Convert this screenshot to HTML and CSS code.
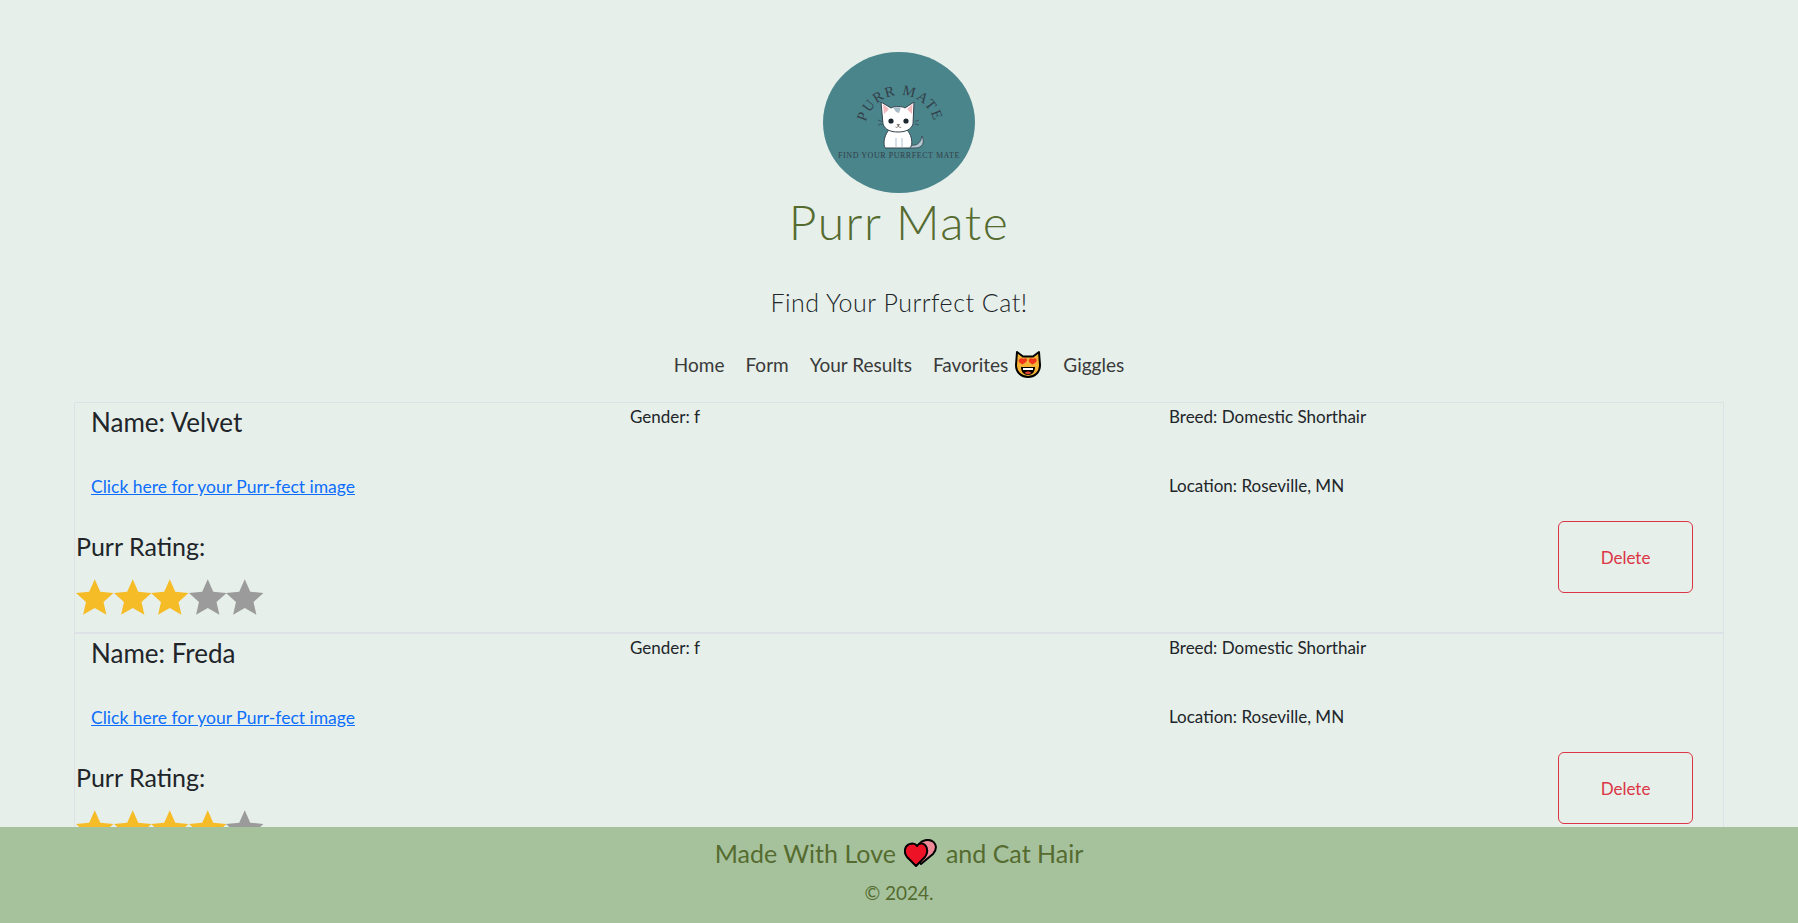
FILE: index.html
```html
<!DOCTYPE html>
<html lang="en">
<head>
<meta charset="utf-8">
<title>Purr Mate</title>
<link rel="stylesheet" href="styles.css">
</head>
<body>
<svg class="defs" width="0" height="0" aria-hidden="true">
  <symbol id="star" viewBox="0 0 38 36"><polygon points="19,0 24.6,12.6 38,13.9 27.9,23 30.8,36 19,29.2 7.2,36 10.1,23 0,13.9 13.4,12.6"/></symbol>
</svg>
<header class="site-header">
  <svg class="logo" viewBox="0 0 152 141" role="img" aria-label="Purr Mate logo">
    <defs><path id="arc" d="M42 78 A35 35 0 0 1 112 78"/></defs>
    <ellipse cx="76" cy="70.5" rx="76" ry="70.5" fill="#4a858c"/>
    <text class="logo-arc"><textPath href="#arc" startOffset="50%" text-anchor="middle">PURR MATE</textPath></text>
    <path d="M84 92 C94 96 98 90 99 84 C102 90 100 96 92 96 L84 96Z" fill="#b4c6cf" stroke="#33424e" stroke-width=".8"/>
    <path d="M66 78 C60 84 60 96 63 96 L86 96 C90 96 90 84 84 78Z" fill="#fff" stroke="#33424e" stroke-width="1"/>
    <path d="M73 86V96M79 86V96" stroke="#9fb0bc" stroke-width=".8"/>
    <path d="M60 72 L58 50 L68 56 C72 54 79 54 82 56 L91 50 L90 72 C88 78 82 80 75 80 C68 80 62 78 60 72Z" fill="#fff" stroke="#33424e" stroke-width="1"/>
    <path d="M60 52 L66 57 L61 62Z M89.500 52 L84 57 L89 62Z" fill="#f2b8bd"/>
    <path d="M70 55.500 C73 55 76 55 78 55.500 L76 61 L73 60Z" fill="#a9bdc9"/>
    <circle cx="68" cy="69" r="2.600" fill="#1d2730"/><circle cx="83" cy="69" r="2.600" fill="#1d2730"/>
    <path d="M74 72.500h2.500l-1.200 1.500zM72.500 75c1.500 1 2 0 2.800-1c.8 1 1.500 2 3 1" fill="#a68d6a" stroke="#3a3a3a" stroke-width=".5"/>
    <path d="M55 68l4 1.500M55 73l4-1M96 68l-4 1.500M96 73l-4-1" stroke="#33424e" stroke-width=".7"/>
    <text class="logo-tag" x="76" y="105.500" text-anchor="middle">FIND YOUR PURRFECT MATE</text>
  </svg>
  <h1 class="title">Purr Mate</h1>
  <p class="tagline">Find Your Purrfect Cat!</p>
  <nav class="nav">
    <a href="#">Home</a>
    <a href="#">Form</a>
    <a href="#">Your Results</a>
    <a href="#" class="fav">Favorites
      <svg class="emoji" viewBox="0 0 28 28" aria-hidden="true">
        <path d="M3 2 L9 6.500 H19 L25 2 L26 15 C26 23 20 27 14 27 C8 27 2 23 2 15Z" fill="#f5b335" stroke="#000" stroke-width="2" stroke-linejoin="round"/>
        <path d="M5 9.500c2-2 4-1.500 4.500-.5c1-1 3-1 3.500.5c.5 2-3 4-4.500 5c-2-1-5-3-3.500-5zM15 9.500c1-1.500 3-1.500 4-.5c1-1 3-1 3.500.5c1 2-2 4-4 5c-2-1-4.500-3-3.500-5z" fill="#f0371c"/>
        <path d="M7 17 H21 C21 22 18 25 14 25 C10 25 7 22 7 17Z" fill="#000"/>
        <path d="M9 18h10v2H9z" fill="#fff"/><path d="M10.500 23c2-2 5-2 7 0c-2 1.500-5 1.500-7 0z" fill="#e8443a"/>
      </svg>
    </a>
    <a href="#">Giggles</a>
  </nav>
</header>
<main class="list">
  <article class="card">
    <div class="row-top">
      <h2 class="name">Name: Velvet</h2>
      <p class="meta">Gender: f</p>
      <p class="meta">Breed: Domestic Shorthair</p>
    </div>
    <div class="row-mid">
      <a class="image-link" href="#">Click here for your Purr-fect image</a>
      <span></span>
      <p class="meta">Location: Roseville, MN</p>
    </div>
    <div class="row-bottom">
      <div class="rating">
        <h3 class="rating-label">Purr Rating:</h3>
        <div class="stars">
          <svg class="star on"><use href="#star"/></svg><svg class="star on"><use href="#star"/></svg><svg class="star on"><use href="#star"/></svg><svg class="star"><use href="#star"/></svg><svg class="star"><use href="#star"/></svg>
        </div>
      </div>
      <button class="delete" type="button">Delete</button>
    </div>
  </article>
  <article class="card">
    <div class="row-top">
      <h2 class="name">Name: Freda</h2>
      <p class="meta">Gender: f</p>
      <p class="meta">Breed: Domestic Shorthair</p>
    </div>
    <div class="row-mid">
      <a class="image-link" href="#">Click here for your Purr-fect image</a>
      <span></span>
      <p class="meta">Location: Roseville, MN</p>
    </div>
    <div class="row-bottom">
      <div class="rating">
        <h3 class="rating-label">Purr Rating:</h3>
        <div class="stars">
          <svg class="star on"><use href="#star"/></svg><svg class="star on"><use href="#star"/></svg><svg class="star on"><use href="#star"/></svg><svg class="star on"><use href="#star"/></svg><svg class="star"><use href="#star"/></svg>
        </div>
      </div>
      <button class="delete" type="button">Delete</button>
    </div>
  </article>
</main>
<footer class="footer">
  <p class="made">Made With Love
    <svg class="hearts" viewBox="0 0 34 28" aria-hidden="true">
      <path d="M15 5 C18 1 24 0 28 2 C33 5 33 11 29 15 L17 25 L10 16Z" fill="#ee8a98" stroke="#000" stroke-width="2" stroke-linejoin="round"/>
      <path d="M12 27 L3 18 C-1 13 1 6 6 5 C9 4 12 5 13 7 C15 4 19 4 21 6 C24 9 24 14 21 18Z" fill="#ee1226" stroke="#000" stroke-width="2" stroke-linejoin="round"/>
    </svg>
    and Cat Hair</p>
  <p class="copy">© 2024.</p>
</footer>
</body>
</html>
```
FILE: styles.css
```css
* { box-sizing: border-box; }
html, body { margin: 0; height: 100%; }
body {
  height: 100vh;
  overflow: hidden;
  display: flex;
  flex-direction: column;
  background: #e6efe9;
  color: #212529;
  font-family: "Lato", "Open Sans", sans-serif;
}
.defs { position: absolute; }
.site-header { padding-top: 52px; text-align: center; flex: none; }
.logo { display: block; width: 152px; height: 141px; margin: 0 auto; }
.logo-arc { font: 14.500px "Liberation Serif", serif; fill: #333f48; letter-spacing: 1.400px; }
.logo-tag { font: 8px "Liberation Serif", serif; fill: #333f48; letter-spacing: .55px; }
.title {
  margin: 0;
  height: 58px;
  font-size: 48px;
  line-height: 58px;
  font-weight: 300;
  color: #556b2f;
  letter-spacing: 1.500px;
}
.tagline {
  margin: 36px 0 0;
  font-size: 25px;
  line-height: 30px;
  font-weight: 300;
  color: #212529;
  letter-spacing: .5px;
}
.nav {
  margin-top: 32px;
  height: 30px;
  display: flex;
  justify-content: center;
  align-items: center;
  gap: 21px;
  font-size: 19px;
}
.nav a { color: #3a3a3a; text-decoration: none; }
.fav { display: flex; align-items: center; gap: 6px; }
.emoji { width: 28px; height: 28px; }
.list { flex: 1 1 0; min-height: 0; overflow: hidden; margin: 23px 74px 0; }
.card { border: 1px solid #dee2e6; height: 231px; padding-left: 16px; }
.row-top, .row-mid {
  display: grid;
  grid-template-columns: 539px 539px 1fr;
}
.row-top { height: 58px; }
.row-mid { height: 50px; align-items: center; }
.name { margin: 0; font-size: 26px; line-height: 38px; font-weight: 400; }
.meta { margin: 0; font-size: 17px; line-height: 28px; }
.row-top .meta { line-height: 28px; }
.image-link { font-size: 17.500px; color: #0d6efd; justify-self: start; }
.row-bottom {
  display: flex;
  justify-content: space-between;
  align-items: flex-start;
  margin-left: -15px;
  padding-right: 30px;
}
.rating-label { margin: 0; padding-top: 20px; font-size: 25px; line-height: 30px; font-weight: 400; }
.stars { display: flex; margin-top: 18px; }
.star { width: 37.500px; height: 36px; fill: #9b9b9b; }
.star.on { fill: #f6bc27; }
.delete {
  margin-top: 10px;
  width: 135px;
  height: 72px;
  border: 1px solid #dc3545;
  border-radius: 6px;
  background: transparent;
  color: #dc3545;
  font: 400 17px "Lato", sans-serif;
}
.footer {
  flex: none;
  height: 96px;
  background: #a5c29d;
  color: #556b2f;
  text-align: center;
  padding-top: 10px;
}
.made { margin: 0; display: flex; justify-content: center; align-items: center; gap: 8px; font-size: 25px; line-height: 32px; }
.hearts { width: 34px; height: 28px; }
.copy { margin: 12px 0 0; font-size: 19px; line-height: 24px; }
```
